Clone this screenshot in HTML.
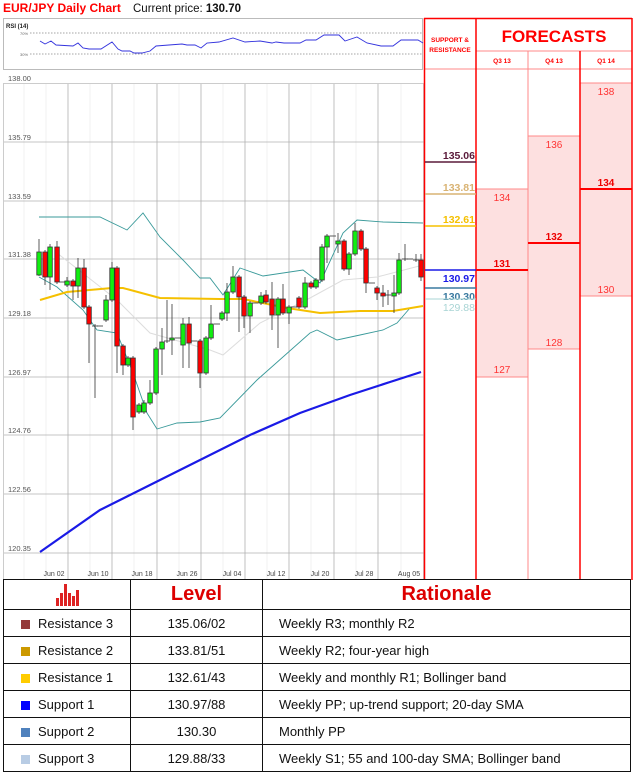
<!DOCTYPE html>
<html><head><meta charset="utf-8"><style>
body{margin:0;background:#fff;width:634px;height:775px;overflow:hidden;position:relative;font-family:"Liberation Sans",sans-serif}
svg{position:absolute;left:0;top:0}
table{position:absolute;left:3px;top:579px;width:628px;border-collapse:collapse;font-size:13px;color:#111}
td{border:1.5px solid #111;height:26px;padding:0}
.sq{display:inline-block;width:9px;height:9px;margin:0 8px 0 17px;vertical-align:-1px}
.h{font-weight:bold;color:#d00;font-size:20px;text-align:center;height:29px}
</style></head><body>
<svg width="634" height="580" viewBox="0 0 634 580">
<text x="3" y="12" font-size="12" font-weight="bold" fill="#f00" font-family="Liberation Sans">EUR/JPY Daily Chart</text>
<text x="133" y="12" font-size="11.5" fill="#111" font-family="Liberation Sans">Current price: <tspan font-weight="bold">130.70</tspan></text>
<!-- RSI -->
<rect x="3.5" y="18.5" width="419" height="51" fill="#fff" stroke="#bbb"/>
<text x="6" y="28" font-size="6" font-weight="bold" fill="#222">RSI (14)</text>
<line x1="30" y1="33" x2="422" y2="33" stroke="#888" stroke-dasharray="1.5,1.5" stroke-width="0.7"/>
<line x1="30" y1="54" x2="422" y2="54" stroke="#888" stroke-dasharray="1.5,1.5" stroke-width="0.7"/>
<text x="20" y="35" font-size="4" fill="#666">70%</text><text x="20" y="56" font-size="4" fill="#666">30%</text>
<polyline fill="none" stroke="#3333dd" stroke-width="0.9" points="40,41 45,44 51,41 56,45 73,46 78,43 83,48 89,49 101,49 112,42 118,49 122,51 130,51 134,53 142,53 150,51 156,46 182,44 187,45 195,45 201,48 207,43 219,42 233,38 245,42 260,41 272,43 276,42 284,43 300,43 306,40 316,40 324,35 339,35 345,41 357,37 367,43 381,46 393,46 401,40 418,40 423,43"/>
<!-- main chart -->
<rect x="3.5" y="83.5" width="420" height="496" fill="#fff" stroke="#ccc"/>
<g stroke="#ececec" stroke-width="0.7">
<line x1="24" y1="84" x2="24" y2="580"/><line x1="46" y1="84" x2="46" y2="580"/><line x1="90" y1="84" x2="90" y2="580"/><line x1="134" y1="84" x2="134" y2="580"/><line x1="179" y1="84" x2="179" y2="580"/><line x1="223" y1="84" x2="223" y2="580"/><line x1="267" y1="84" x2="267" y2="580"/><line x1="311" y1="84" x2="311" y2="580"/><line x1="356" y1="84" x2="356" y2="580"/><line x1="401" y1="84" x2="401" y2="580"/>
</g>
<g stroke="#b0b0b0" stroke-width="0.8">
<line x1="68" y1="84" x2="68" y2="580"/><line x1="112" y1="84" x2="112" y2="580"/><line x1="157" y1="84" x2="157" y2="580"/><line x1="201" y1="84" x2="201" y2="580"/><line x1="245" y1="84" x2="245" y2="580"/><line x1="289" y1="84" x2="289" y2="580"/><line x1="334" y1="84" x2="334" y2="580"/><line x1="378" y1="84" x2="378" y2="580"/>
<line x1="4" y1="142" x2="424" y2="142"/><line x1="4" y1="201" x2="424" y2="201"/><line x1="4" y1="259" x2="424" y2="259"/><line x1="4" y1="318" x2="424" y2="318"/><line x1="4" y1="377" x2="424" y2="377"/><line x1="4" y1="435" x2="424" y2="435"/><line x1="4" y1="494" x2="424" y2="494"/><line x1="4" y1="553" x2="424" y2="553"/>
</g>
<g font-size="7.5" fill="#555" font-family="Liberation Sans">
<text x="8" y="81">138.00</text><text x="8" y="140">135.79</text><text x="8" y="199">133.59</text><text x="8" y="257">131.38</text><text x="8" y="316">129.18</text><text x="8" y="375">126.97</text><text x="8" y="433">124.76</text><text x="8" y="492">122.56</text><text x="8" y="551">120.35</text>
</g>
<g font-size="7" fill="#444" text-anchor="middle" font-family="Liberation Sans">
<text x="54" y="576">Jun 02</text><text x="98" y="576">Jun 10</text><text x="142" y="576">Jun 18</text><text x="187" y="576">Jun 26</text><text x="232" y="576">Jul 04</text><text x="276" y="576">Jul 12</text><text x="320" y="576">Jul 20</text><text x="364" y="576">Jul 28</text><text x="409" y="576">Aug 05</text>
</g>
<!-- indicators -->
<polyline fill="none" stroke="#ddd" stroke-width="1" points="57,253 117,300 150,333 210,350 223,355 260,323 310,298 343,280 377,277 423,265"/>
<polyline fill="none" stroke="#3a9a9a" stroke-width="0.9" points="39,217 67,217 100,217 127,230 143,213 160,237 183,260 200,278 210,278 223,295 240,268 263,276 303,270 320,283 343,233 357,220 383,222 423,223"/>
<polyline fill="none" stroke="#3a9a9a" stroke-width="0.9" points="39,277 57,287 83,310 97,330 117,333 133,373 147,413 157,429 177,423 200,422 220,418 257,380 310,333 317,330 337,340 360,335 383,330 397,323 410,308 423,306"/>
<polyline fill="none" stroke="#f5c000" stroke-width="2" points="40,300 67,292 112,288 123,288 160,298 220,299 243,299 287,308 320,313 360,311 393,311 423,306"/>
<polyline fill="none" stroke="#1a1ae6" stroke-width="2.2" points="40,552 100,510 150,485 200,460 250,435 300,413 350,395 390,382 421,372"/>
<!-- candles -->
<g stroke="#222" stroke-width="0.8" id="c"></g>
<g stroke="#333" stroke-width="0.8">
<line x1="39" y1="239" x2="39" y2="276"/><rect x="36.8" y="252" width="4.5" height="23" fill="#1e1"/>
<line x1="45" y1="250" x2="45" y2="285"/><rect x="42.8" y="252" width="4.5" height="25" fill="#f00"/>
<line x1="50" y1="244" x2="50" y2="290"/><rect x="47.8" y="247" width="4.5" height="30" fill="#1e1"/>
<line x1="57" y1="241" x2="57" y2="284"/><rect x="54.8" y="247" width="4.5" height="35" fill="#f00"/>
<line x1="59" y1="282" x2="65" y2="282"/>
<line x1="67" y1="277" x2="67" y2="287"/><rect x="64.8" y="281" width="4.5" height="4" fill="#1e1"/>
<line x1="73" y1="279" x2="73" y2="300"/><rect x="70.8" y="281" width="4.5" height="5" fill="#f00"/>
<line x1="78" y1="258" x2="78" y2="298"/><rect x="75.8" y="268" width="4.5" height="18" fill="#1e1"/>
<line x1="84" y1="259" x2="84" y2="309"/><rect x="81.8" y="268" width="4.5" height="39" fill="#f00"/>
<line x1="89" y1="305" x2="89" y2="363"/><rect x="86.8" y="307" width="4.5" height="17" fill="#f00"/>
<line x1="95" y1="324" x2="95" y2="398"/><line x1="92" y1="326" x2="98" y2="326"/>
<line x1="97" y1="326" x2="103" y2="326"/>
<line x1="106" y1="295" x2="106" y2="322"/><rect x="103.8" y="300" width="4.5" height="20" fill="#1e1"/>
<line x1="112" y1="262" x2="112" y2="302"/><rect x="109.8" y="268" width="4.5" height="32" fill="#1e1"/>
<line x1="117" y1="266" x2="117" y2="373"/><rect x="114.8" y="268" width="4.5" height="78" fill="#f00"/>
<line x1="123" y1="344" x2="123" y2="375"/><rect x="120.8" y="346" width="4.5" height="19" fill="#f00"/>
<line x1="128" y1="356" x2="128" y2="367"/><rect x="125.8" y="358" width="4.5" height="7" fill="#1e1"/>
<line x1="133" y1="356" x2="133" y2="430"/><rect x="130.8" y="358" width="4.5" height="59" fill="#f00"/>
<line x1="139" y1="403" x2="139" y2="414"/><rect x="136.8" y="405" width="4.5" height="7" fill="#1e1"/>
<line x1="144" y1="400" x2="144" y2="414"/><rect x="141.8" y="403" width="4.5" height="9" fill="#1e1"/>
<line x1="150" y1="380" x2="150" y2="405"/><rect x="147.8" y="393" width="4.5" height="10" fill="#1e1"/>
<line x1="156" y1="347" x2="156" y2="395"/><rect x="153.8" y="349" width="4.5" height="44" fill="#1e1"/>
<line x1="162" y1="328" x2="162" y2="375"/><rect x="159.8" y="342" width="4.5" height="7" fill="#1e1"/>
<line x1="167" y1="300" x2="167" y2="343"/><line x1="164" y1="341" x2="170" y2="341"/>
<line x1="172" y1="304" x2="172" y2="355"/><rect x="169.8" y="338" width="4.5" height="2" fill="#1e1"/>
<line x1="175" y1="338" x2="181" y2="338"/>
<line x1="183" y1="318" x2="183" y2="368"/><rect x="180.8" y="324" width="4.5" height="21" fill="#1e1"/>
<line x1="189" y1="317" x2="189" y2="368"/><rect x="186.8" y="324" width="4.5" height="19" fill="#f00"/>
<line x1="191" y1="341" x2="197" y2="341"/>
<line x1="200" y1="339" x2="200" y2="388"/><rect x="197.8" y="341" width="4.5" height="32" fill="#f00"/>
<line x1="206" y1="336" x2="206" y2="375"/><rect x="203.8" y="338" width="4.5" height="35" fill="#1e1"/>
<line x1="211" y1="305" x2="211" y2="340"/><rect x="208.8" y="324" width="4.5" height="14" fill="#1e1"/>
<line x1="214" y1="324" x2="220" y2="324"/>
<line x1="222" y1="311" x2="222" y2="321"/><rect x="219.8" y="313" width="4.5" height="6" fill="#1e1"/>
<line x1="227" y1="283" x2="227" y2="321"/><rect x="224.8" y="292" width="4.5" height="21" fill="#1e1"/>
<line x1="233" y1="266" x2="233" y2="294"/><rect x="230.8" y="277" width="4.5" height="15" fill="#1e1"/>
<line x1="239" y1="275" x2="239" y2="332"/><rect x="236.8" y="277" width="4.5" height="20" fill="#f00"/>
<line x1="244" y1="295" x2="244" y2="328"/><rect x="241.8" y="297" width="4.5" height="19" fill="#f00"/>
<line x1="250" y1="301" x2="250" y2="333"/><rect x="247.8" y="303" width="4.5" height="13" fill="#1e1"/>
<line x1="252" y1="303" x2="258" y2="303"/>
<line x1="261" y1="292" x2="261" y2="305"/><rect x="258.8" y="296" width="4.5" height="7" fill="#1e1"/>
<line x1="266" y1="290" x2="266" y2="304"/><rect x="263.8" y="295" width="4.5" height="7" fill="#f00"/>
<line x1="272" y1="282" x2="272" y2="330"/><rect x="269.8" y="299" width="4.5" height="16" fill="#f00"/>
<line x1="278" y1="297" x2="278" y2="348"/><rect x="275.8" y="299" width="4.5" height="16" fill="#1e1"/>
<line x1="283" y1="284" x2="283" y2="315"/><rect x="280.8" y="299" width="4.5" height="14" fill="#f00"/>
<line x1="289" y1="305" x2="289" y2="324"/><rect x="286.8" y="307" width="4.5" height="6" fill="#1e1"/>
<line x1="291" y1="307" x2="297" y2="307"/>
<line x1="299" y1="296" x2="299" y2="309"/><rect x="296.8" y="298" width="4.5" height="9" fill="#f00"/>
<line x1="305" y1="277" x2="305" y2="309"/><rect x="302.8" y="283" width="4.5" height="24" fill="#1e1"/>
<line x1="311" y1="281" x2="311" y2="289"/><rect x="308.8" y="283" width="4.5" height="4" fill="#f00"/>
<line x1="316" y1="278" x2="316" y2="289"/><rect x="313.8" y="280" width="4.5" height="7" fill="#1e1"/>
<line x1="322" y1="244" x2="322" y2="282"/><rect x="319.8" y="247" width="4.5" height="33" fill="#1e1"/>
<line x1="327" y1="234" x2="327" y2="263"/><rect x="324.8" y="236" width="4.5" height="11" fill="#1e1"/>
<line x1="330" y1="236" x2="336" y2="236"/>
<line x1="338" y1="233" x2="338" y2="253"/><rect x="335.8" y="241" width="4.5" height="3" fill="#1e1"/>
<line x1="344" y1="239" x2="344" y2="271"/><rect x="341.8" y="241" width="4.5" height="28" fill="#f00"/>
<line x1="349" y1="252" x2="349" y2="275"/><rect x="346.8" y="254" width="4.5" height="15" fill="#1e1"/>
<line x1="355" y1="223" x2="355" y2="256"/><rect x="352.8" y="231" width="4.5" height="23" fill="#1e1"/>
<line x1="361" y1="229" x2="361" y2="251"/><rect x="358.8" y="231" width="4.5" height="18" fill="#f00"/>
<line x1="366" y1="247" x2="366" y2="293"/><rect x="363.8" y="249" width="4.5" height="34" fill="#f00"/>
<line x1="369" y1="283" x2="375" y2="283"/>
<line x1="377" y1="286" x2="377" y2="300"/><rect x="374.8" y="288" width="4.5" height="5" fill="#f00"/>
<line x1="383" y1="285" x2="383" y2="307"/><rect x="380.8" y="293" width="4.5" height="3" fill="#f00"/>
<line x1="388" y1="290" x2="388" y2="305"/><line x1="385" y1="295" x2="391" y2="295"/>
<line x1="394" y1="275" x2="394" y2="313"/><rect x="391.8" y="293" width="4.5" height="3" fill="#1e1"/>
<line x1="399" y1="253" x2="399" y2="295"/><rect x="396.8" y="260" width="4.5" height="33" fill="#1e1"/>
<line x1="405" y1="244" x2="405" y2="261"/><line x1="402" y1="259" x2="408" y2="259"/>
<line x1="407" y1="259" x2="413" y2="259"/>
<line x1="416" y1="254" x2="416" y2="262"/><line x1="413" y1="260" x2="419" y2="260"/>
<line x1="421" y1="254" x2="421" y2="281"/><rect x="418.8" y="260" width="4.5" height="17" fill="#f00"/>
</g>
<!-- right panel -->
<rect x="476" y="189" width="52" height="188" fill="#fde0e0" stroke="#f88" stroke-width="1"/>
<rect x="528" y="136" width="52" height="213" fill="#fde0e0" stroke="#f88" stroke-width="1"/>
<rect x="580" y="83" width="52" height="213" fill="#fde0e0" stroke="#f88" stroke-width="1"/>
<g stroke="#f88" stroke-width="1"><line x1="476" y1="51" x2="632" y2="51"/><line x1="424" y1="69" x2="632" y2="69"/><line x1="528" y1="51" x2="528" y2="580"/></g>
<g stroke="#f00" stroke-width="1.5"><line x1="424.5" y1="18" x2="424.5" y2="580"/><line x1="476" y1="18" x2="476" y2="580"/><line x1="580" y1="51" x2="580" y2="580"/><line x1="632" y1="18" x2="632" y2="580"/><line x1="424" y1="18.5" x2="632" y2="18.5"/></g>
<g fill="#f00" font-family="Liberation Sans" font-weight="bold" text-anchor="middle">
<text x="450" y="42" font-size="6.5">SUPPORT &amp;</text><text x="450" y="52" font-size="6.5">RESISTANCE</text>
<text x="554" y="42" font-size="17">FORECASTS</text>
<text x="502" y="63" font-size="6.5">Q3 13</text><text x="554" y="63" font-size="6.5">Q4 13</text><text x="606" y="63" font-size="6.5">Q1 14</text>
</g>
<g fill="#f33" font-family="Liberation Sans" font-size="10" text-anchor="middle">
<text x="502" y="201">134</text><text x="502" y="373">127</text>
<text x="554" y="148">136</text><text x="554" y="346">128</text>
<text x="606" y="95">138</text><text x="606" y="293">130</text>
</g>
<g stroke="#f00" stroke-width="2"><line x1="476" y1="270" x2="528" y2="270"/><line x1="528" y1="243" x2="580" y2="243"/><line x1="580" y1="189" x2="632" y2="189"/></g>
<g fill="#e00" font-family="Liberation Sans" font-size="10" font-weight="bold" text-anchor="middle">
<text x="502" y="267">131</text><text x="554" y="240">132</text><text x="606" y="186">134</text>
</g>
<g font-family="Liberation Sans" font-size="10.5" font-weight="bold" text-anchor="end">
<line x1="425" y1="162" x2="476" y2="162" stroke="#5a1a3a" stroke-width="1.5"/><text x="475" y="159" fill="#5a1a3a">135.06</text>
<line x1="425" y1="194" x2="476" y2="194" stroke="#d9b373" stroke-width="1.5"/><text x="475" y="191" fill="#d9b373">133.81</text>
<line x1="425" y1="226" x2="476" y2="226" stroke="#f5c000" stroke-width="1.5"/><text x="475" y="223" fill="#f5c000">132.61</text>
<line x1="425" y1="270" x2="476" y2="270" stroke="#1a1ae6" stroke-width="1.5"/><text x="475" y="282" fill="#1a1ae6">130.97</text>
<line x1="425" y1="288" x2="476" y2="288" stroke="#3a7aa0" stroke-width="1.5"/><text x="475" y="300" fill="#3a7aa0">130.30</text>
<line x1="425" y1="299" x2="476" y2="299" stroke="#a8d4d4" stroke-width="1"/><text x="475" y="311" fill="#a8d4d4" font-weight="normal">129.88</text>
</g>
</svg>
<table>
<tr><td class="h" style="width:126px"><svg width="24" height="22" viewBox="0 0 24 22" style="position:static;vertical-align:middle"><g fill="#d22"><rect x="1" y="14" width="3" height="8"/><rect x="5" y="9" width="3" height="13"/><rect x="9" y="0" width="3" height="22"/><rect x="13" y="9" width="3" height="13"/><rect x="17" y="12" width="3" height="10"/><rect x="21" y="6" width="3" height="16"/></g></svg></td><td class="h" style="width:131px">Level</td><td class="h">Rationale</td></tr>
<tr><td><span class="sq" style="background:#943a3a"></span>Resistance 3</td><td style="text-align:center">135.06/02</td><td style="padding-left:16px">Weekly R3; monthly R2</td></tr>
<tr><td><span class="sq" style="background:#cc9900"></span>Resistance 2</td><td style="text-align:center">133.81/51</td><td style="padding-left:16px">Weekly R2; four-year high</td></tr>
<tr><td><span class="sq" style="background:#ffcc00"></span>Resistance 1</td><td style="text-align:center">132.61/43</td><td style="padding-left:16px">Weekly and monthly R1; Bollinger band</td></tr>
<tr><td><span class="sq" style="background:#0000ff"></span>Support 1</td><td style="text-align:center">130.97/88</td><td style="padding-left:16px">Weekly PP; up-trend support; 20-day SMA</td></tr>
<tr><td><span class="sq" style="background:#4f81bd"></span>Support 2</td><td style="text-align:center">130.30</td><td style="padding-left:16px">Monthly PP</td></tr>
<tr><td><span class="sq" style="background:#b8cce4"></span>Support 3</td><td style="text-align:center">129.88/33</td><td style="padding-left:16px">Weekly S1; 55 and 100-day SMA; Bollinger band</td></tr>
</table>
</body></html>
